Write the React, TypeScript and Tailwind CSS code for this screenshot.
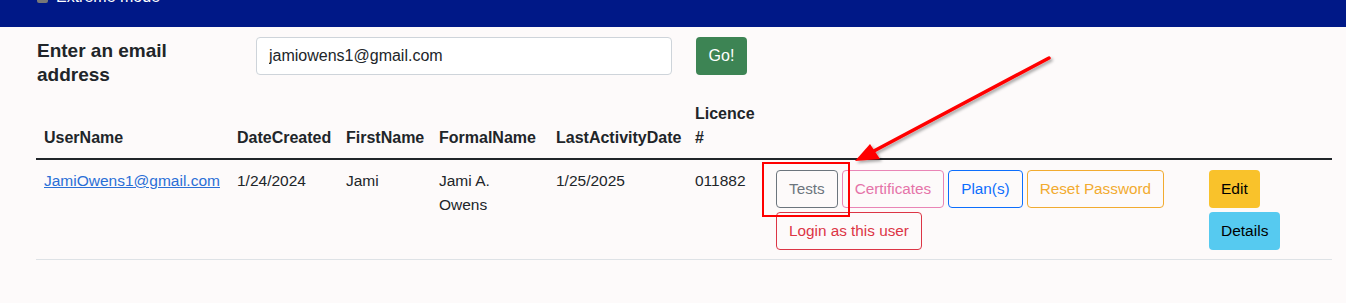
import { useState } from 'react';

const actions = [
  { label: 'Tests', cls: 'border-[#6c757d] text-[#6c757d]' },
  { label: 'Certificates', cls: 'border-[#e985b6] text-[#e573a8]' },
  { label: 'Plan(s)', cls: 'border-[#0d6efd] text-[#0d6efd]' },
  { label: 'Reset Password', cls: 'border-[#f2ab2f] text-[#f2ab2f]' },
  { label: 'Login as this user', cls: 'border-[#dc3545] text-[#dc3545]' },
];

export default function App() {
  const [email, setEmail] = useState('jamiowens1@gmail.com');

  return (
    <div className="relative min-h-screen bg-[#fdfafa] text-[#212529] font-['Liberation_Sans',Arial,sans-serif] text-[16px]">
      {/* Top nav (scrolled, only bottom visible) */}
      <div className="h-[27px] bg-[#001887] overflow-hidden">
        <div className="flex items-center gap-2 pl-[37px] -mt-[11px] text-white text-[16px] leading-[16px]">
          <span className="w-[11px] h-[11px] bg-[#777] rounded-[2px]" />
          <span>Extreme mode</span>
        </div>
      </div>

      <div className="pl-[36px] pr-[14px]">
        {/* Search form */}
        <div className="flex items-start pt-[10px]">
          <label className="w-[220px] pl-[1px] pt-[2px] text-[19px] leading-[24px] font-semibold">
            <span className="block w-[150px]">Enter an email address</span>
          </label>
          <input
            value={email}
            onChange={(e) => setEmail(e.target.value)}
            className="w-[416px] h-[38px] px-[12px] bg-white border border-[#ced4da] rounded-[4px] text-[16px] outline-none"
          />
          <button className="ml-[24px] w-[51px] h-[38px] rounded-[4px] bg-[#3d8454] text-white text-[16px]">Go!</button>
        </div>

        {/* Results table */}
        <table className="mt-[7px] w-full table-fixed border-collapse">
          <colgroup>
            <col className="w-[193px]" />
            <col className="w-[109px]" />
            <col className="w-[93px]" />
            <col className="w-[117px]" />
            <col className="w-[139px]" />
            <col className="w-[81px]" />
            <col className="w-[433px]" />
            <col />
          </colgroup>
          <thead>
            <tr className="border-b-2 border-[#212529] text-left align-bottom">
              <th className="p-[8px] leading-[24px] font-bold">UserName</th>
              <th className="p-[8px] leading-[24px] font-bold">DateCreated</th>
              <th className="p-[8px] leading-[24px] font-bold">FirstName</th>
              <th className="p-[8px] leading-[24px] font-bold">FormalName</th>
              <th className="p-[8px] leading-[24px] font-bold">LastActivityDate</th>
              <th className="p-[8px] leading-[24px] font-bold">Licence #</th>
              <th className="p-[8px]" />
              <th className="p-[8px]" />
            </tr>
          </thead>
          <tbody>
            <tr className="border-b border-[#dee2e6] align-top leading-[24px] text-[15.5px]">
              <td className="p-[8px] pt-[9px]">
                <a href="#" className="text-[#2b6fd6] underline">JamiOwens1@gmail.com</a>
              </td>
              <td className="p-[8px] pt-[9px]">1/24/2024</td>
              <td className="p-[8px] pt-[9px]">Jami</td>
              <td className="p-[8px] pt-[9px]">Jami A. Owens</td>
              <td className="p-[8px] pt-[9px]">1/25/2025</td>
              <td className="p-[8px] pt-[9px]">011882</td>
              <td className="p-[8px] pt-[10px] pb-[9px]">
                <div className="flex flex-wrap gap-x-[4px] gap-y-[4px]">
                  {actions.map((a) => (
                    <button key={a.label} className={`h-[38px] px-[12px] border rounded-[4px] bg-transparent text-[15.3px] ${a.cls}`}>
                      {a.label}
                    </button>
                  ))}
                </div>
              </td>
              <td className="p-[8px] pt-[10px]">
                <div className="flex flex-col items-start gap-[4px]">
                  <button className="h-[38px] px-[12px] rounded-[4px] bg-[#f9c22b] text-black text-[15.5px]">Edit</button>
                  <button className="h-[38px] px-[12px] rounded-[4px] bg-[#56caf0] text-black text-[15.5px]">Details</button>
                </div>
              </td>
            </tr>
          </tbody>
        </table>
      </div>

      {/* Annotation overlay */}
      <svg className="absolute left-0 top-0 pointer-events-none" width="1346" height="303">
        <defs>
          <filter id="sh" x="-10%" y="-10%" width="120%" height="120%">
            <feDropShadow dx="2" dy="2" stdDeviation="1.5" floodColor="#000" floodOpacity="0.35" />
          </filter>
        </defs>
        <rect x="763" y="163" width="86" height="53" fill="none" stroke="#ff0000" strokeWidth="2" />
        <g filter="url(#sh)">
          <line x1="1049" y1="58" x2="872" y2="152" stroke="#ff0000" strokeWidth="3.5" strokeLinecap="round" />
          <polygon points="855,161 870,144 880,159" fill="#ff0000" />
        </g>
      </svg>
    </div>
  );
}
